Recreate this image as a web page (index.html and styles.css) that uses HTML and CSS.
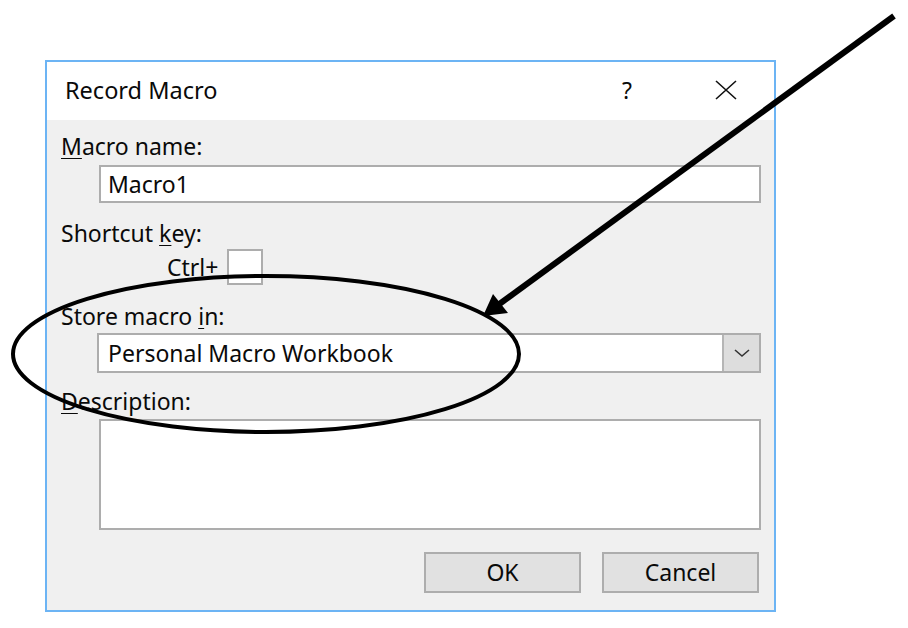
FILE: index.html
```html
<!DOCTYPE html>
<html lang="en">
<head>
    <meta charset="UTF-8">
    <title>Record Macro</title>
    <link rel="stylesheet" href="styles.css">
</head>
<body>
    <div class="dialog">
        <div class="titlebar">
            <span class="title">Record Macro</span>
            <span class="help">?</span>
            <span class="close">
                <svg width="24" height="20" viewBox="0 0 24 20"><path d="M2 1 L22 19 M22 1 L2 19" stroke="#111" stroke-width="1.6" fill="none"/></svg>
            </span>
        </div>
        <div class="content">
            <div class="label"><u>M</u>acro name:</div>
            <div class="textbox">Macro1</div>

            <div class="label label-gap">Shortcut <u>k</u>ey:</div>
            <div class="shortcut">
                <span>Ctrl+</span>
                <span class="keybox"></span>
            </div>

            <div class="label label-store">Store macro <u>i</u>n:</div>
            <div class="combo">
                <span class="combo-text">Personal Macro Workbook</span>
                <span class="combo-btn">
                    <svg width="16" height="10" viewBox="0 0 16 10"><path d="M1 2 L8 8 L15 2" stroke="#333" stroke-width="1.6" fill="none"/></svg>
                </span>
            </div>

            <div class="label label-desc"><u>D</u>escription:</div>
            <div class="textarea"></div>

            <div class="buttons">
                <div class="btn">OK</div>
                <div class="btn">Cancel</div>
            </div>
        </div>
    </div>

    <!-- callout drawn over the dialog -->
    <svg class="callout" width="908" height="628" viewBox="0 0 908 628">
        <ellipse cx="266" cy="354" rx="253" ry="78" fill="none" stroke="#000" stroke-width="4"/>
        <line x1="894" y1="16" x2="498" y2="305" stroke="#000" stroke-width="6"/>
        <polygon points="483,316 493,294 508,313" fill="#000"/>
    </svg>
</body>
</html>
```

FILE: styles.css
```css
html, body {
    margin: 0;
    background: #fff;
}
body {
    position: relative;
    width: 908px;
    height: 628px;
    padding: 60px 0 0 45px;
    box-sizing: border-box;
    font-family: 'Noto Sans', 'Open Sans', sans-serif;
    font-size: 23px;
    color: #0a0a0a;
}
.dialog {
    width: 731px;
    height: 552px;
    box-sizing: border-box;
    border: 2px solid #6cb4f4;
    background: #f0f0f0;
    display: flex;
    flex-direction: column;
}
.titlebar {
    height: 58px;
    background: #fff;
    display: flex;
    align-items: center;
    padding: 0 0 0 18px;
}
.title {
    flex: 1;
    font-size: 23.5px;
    padding-bottom: 3px;
}
.help {
    width: 20px;
    margin-right: 72px;
    font-size: 23px;
    padding-bottom: 3px;
}
.close {
    display: flex;
    margin-right: 36px;
    padding-bottom: 2px;
}
.content {
    flex: 1;
    padding: 12px 13px 0 14px;
}
.label {
    line-height: 28px;
}
.label u {
    text-decoration-thickness: 1px;
    text-underline-offset: 3px;
}
.label-gap {
    margin-top: 16px;
}
.label-store {
    margin-top: 17px;
}
.label-desc {
    margin-top: 14px;
}
.textbox {
    margin: 5px 0 0 38px;
    height: 38px;
    box-sizing: border-box;
    border: 2px solid #adadad;
    background: #fff;
    padding-left: 7px;
    line-height: 34px;
}
.shortcut {
    display: flex;
    align-items: center;
    gap: 9px;
    margin: 2px 0 0 106px;
}
.keybox {
    width: 36px;
    height: 36px;
    box-sizing: border-box;
    border: 2px solid #adadad;
    background: #fff;
}
.combo {
    margin: 3px 0 0 36px;
    height: 40px;
    box-sizing: border-box;
    border: 2px solid #adadad;
    background: #fff;
    display: flex;
}
.combo-text {
    flex: 1;
    padding-left: 9px;
    line-height: 36px;
}
.combo-btn {
    width: 35px;
    background: #dddddd;
    border-left: 2px solid #b5b5b5;
    display: flex;
    align-items: center;
    justify-content: center;
}
.textarea {
    margin: 4px 0 0 38px;
    height: 111px;
    box-sizing: border-box;
    border: 2px solid #adadad;
    background: #fff;
}
.buttons {
    display: flex;
    justify-content: flex-end;
    gap: 21px;
    margin: 22px 2px 0 0;
}
.btn {
    width: 157px;
    height: 41px;
    box-sizing: border-box;
    border: 2px solid #adadad;
    background: #e1e1e1;
    text-align: center;
    line-height: 37px;
}
.callout {
    position: absolute;
    left: 0;
    top: 0;
    pointer-events: none;
}
```
